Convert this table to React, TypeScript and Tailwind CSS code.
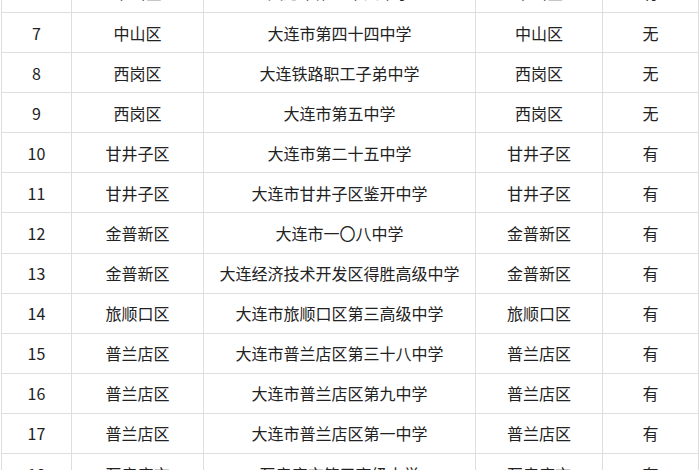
import React from 'react';

type Row = [string, string, string, string, string];

const rows: Row[] = [
  ['6', '中山区', '大连市第二十四中学', '中山区', '有'],
  ['7', '中山区', '大连市第四十四中学', '中山区', '无'],
  ['8', '西岗区', '大连铁路职工子弟中学', '西岗区', '无'],
  ['9', '西岗区', '大连市第五中学', '西岗区', '无'],
  ['10', '甘井子区', '大连市第二十五中学', '甘井子区', '有'],
  ['11', '甘井子区', '大连市甘井子区鉴开中学', '甘井子区', '有'],
  ['12', '金普新区', '大连市一〇八中学', '金普新区', '有'],
  ['13', '金普新区', '大连经济技术开发区得胜高级中学', '金普新区', '有'],
  ['14', '旅顺口区', '大连市旅顺口区第三高级中学', '旅顺口区', '有'],
  ['15', '普兰店区', '大连市普兰店区第三十八中学', '普兰店区', '有'],
  ['16', '普兰店区', '大连市普兰店区第九中学', '普兰店区', '有'],
  ['17', '普兰店区', '大连市普兰店区第一中学', '普兰店区', '有'],
  ['18', '瓦房店市', '瓦房店市第三高级中学', '瓦房店市', '有'],
];

export default function App() {
  return (
    <div
      className="w-[700px] h-[470px] overflow-hidden bg-white"
      style={{ fontFamily: '"Noto Sans CJK SC", "Noto Sans", sans-serif' }}
    >
      <table className="ml-[1px] mt-[-28.1px] w-[697px] table-fixed border-collapse text-[16px] text-[#222222]">
        <colgroup>
          <col className="w-[70px]" />
          <col className="w-[132px]" />
          <col className="w-[272px]" />
          <col className="w-[127px]" />
          <col className="w-[96px]" />
        </colgroup>
        <tbody>
          {rows.map((r) => (
            <tr key={r[0]} className="h-[40.1px]">
              {r.map((c, i) => (
                <td
                  key={i}
                  className="border border-[#dedede] p-0 text-center align-middle leading-none"
                >
                  {c}
                </td>
              ))}
            </tr>
          ))}
        </tbody>
      </table>
    </div>
  );
}
